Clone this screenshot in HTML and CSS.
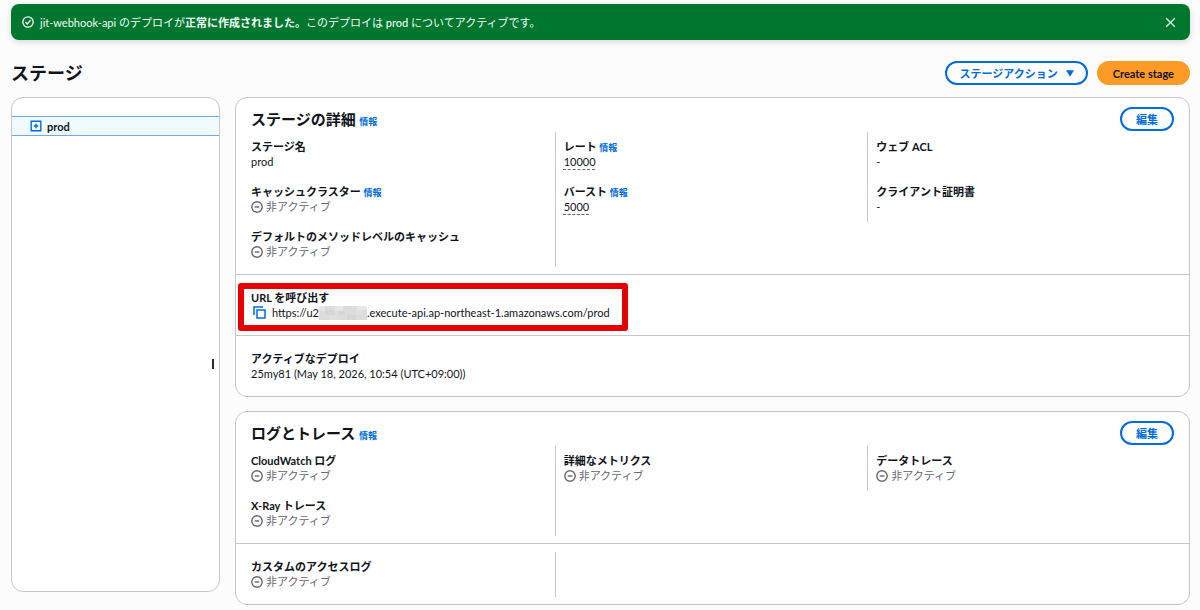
FILE: index.html
```html
<!DOCTYPE html>
<html lang="ja">
<head>
<meta charset="utf-8">
<meta name="viewport" content="width=device-width, initial-scale=1">
<title>ステージ</title>
<link rel="stylesheet" href="styles.css">
</head>
<body>
<svg class="defs" aria-hidden="true">
  <symbol id="minus-circle" viewBox="0 0 12 12"><circle cx="6" cy="6" r="5.2" fill="none" stroke="currentColor" stroke-width="1.4"/><path d="M3.7 6h4.6" stroke="currentColor" stroke-width="1.4"/></symbol>
</svg>
<div class="page">
  <div class="flash" role="status">
    <svg class="icon" viewBox="0 0 12 12" aria-hidden="true"><circle cx="6" cy="6" r="5.2" fill="none" stroke="currentColor" stroke-width="1.3"/><path d="M3.4 6.1l1.8 1.8 3.4-3.6" fill="none" stroke="currentColor" stroke-width="1.4"/></svg>
    <p class="flash-text">jit-webhook-api のデプロイが<strong>正常に作成されました。</strong>このデプロイは <span class="medium">prod</span> についてアクティブです。</p>
    <button class="flash-close" type="button" aria-label="閉じる"><svg viewBox="0 0 12 12" aria-hidden="true"><path d="M1.3 1.3l9.4 9.4M10.7 1.3l-9.4 9.4" stroke="currentColor" stroke-width="1.5"/></svg></button>
  </div>

  <header class="page-header">
    <h1>ステージ</h1>
    <div class="actions">
      <button class="btn btn-menu" type="button">ステージアクション<svg viewBox="0 0 8 7" aria-hidden="true"><path d="M0 .3h8L4 6.7z" fill="currentColor"/></svg></button>
      <button class="btn btn-primary" type="button">Create stage</button>
    </div>
  </header>

  <div class="layout">
    <nav class="card tree" aria-label="ステージ">
      <div class="tree-item">
        <button class="tree-toggle" type="button" aria-label="展開"><svg viewBox="0 0 12 12" aria-hidden="true"><path d="M1.2 1.2h9.6v9.6H1.2zM6 3.7v4.6M3.7 6h4.6" fill="none" stroke="currentColor" stroke-width="1.4"/></svg></button>
        <a href="#prod">prod</a>
      </div>
      <button class="tree-resize" type="button" aria-label="サイズ変更"></button>
    </nav>

    <main class="content">
      <section class="card">
        <div class="card-header">
          <h2>ステージの詳細 <a class="info" href="#info">情報</a></h2>
          <button class="btn" type="button">編集</button>
        </div>
        <div class="block block-first columns">
          <dl class="column">
            <div class="item"><dt>ステージ名</dt><dd>prod</dd></div>
            <div class="item"><dt>キャッシュクラスター <a class="info" href="#info">情報</a></dt><dd class="status"><svg class="icon" aria-hidden="true"><use href="#minus-circle"/></svg>非アクティブ</dd></div>
            <div class="item"><dt>デフォルトのメソッドレベルのキャッシュ</dt><dd class="status"><svg class="icon" aria-hidden="true"><use href="#minus-circle"/></svg>非アクティブ</dd></div>
          </dl>
          <dl class="column">
            <div class="item"><dt>レート <a class="info" href="#info">情報</a></dt><dd><span class="hint">10000</span></dd></div>
            <div class="item"><dt>バースト <a class="info" href="#info">情報</a></dt><dd><span class="hint">5000</span></dd></div>
          </dl>
          <dl class="column">
            <div class="item"><dt>ウェブ ACL</dt><dd>-</dd></div>
            <div class="item"><dt>クライアント証明書</dt><dd>-</dd></div>
          </dl>
        </div>
        <div class="block">
          <dl class="item marked">
            <dt>URL を呼び出す</dt>
            <dd class="url">
              <button class="copy" type="button" aria-label="コピー"><svg viewBox="0 0 13 13" aria-hidden="true"><path d="M1 9V1h9M4 4h8v8H4z" fill="none" stroke="currentColor" stroke-width="1.5"/></svg></button>
              <span>https://u2</span><svg class="redacted" viewBox="0 0 48 14" preserveAspectRatio="none" aria-hidden="true"><path d="M0 0h48v14H0z" fill="#dcdcdc"/><path d="M0 0h6v5H0zM16 0h8v5h-8zM38 0h10v4H38z" fill="#e6e6e6"/><path d="M6 4h9v5H6zM28 9h9v5h-9zM20 5h6v4h-6z" fill="#d6d6d6"/><path d="M37 4h6v5h-6zM11 9h6v5h-6z" fill="#e0e0e0"/></svg><span>.execute-api.ap-northeast-1.amazonaws.com/prod</span>
            </dd>
          </dl>
        </div>
        <div class="block">
          <dl class="item"><dt>アクティブなデプロイ</dt><dd>25my81 (May 18, 2026, 10:54 (UTC+09:00))</dd></dl>
        </div>
      </section>

      <section class="card">
        <div class="card-header">
          <h2>ログとトレース <a class="info" href="#info">情報</a></h2>
          <button class="btn" type="button">編集</button>
        </div>
        <div class="block block-first columns">
          <dl class="column">
            <div class="item"><dt>CloudWatch ログ</dt><dd class="status"><svg class="icon" aria-hidden="true"><use href="#minus-circle"/></svg>非アクティブ</dd></div>
            <div class="item"><dt>X-Ray トレース</dt><dd class="status"><svg class="icon" aria-hidden="true"><use href="#minus-circle"/></svg>非アクティブ</dd></div>
          </dl>
          <dl class="column">
            <div class="item"><dt>詳細なメトリクス</dt><dd class="status"><svg class="icon" aria-hidden="true"><use href="#minus-circle"/></svg>非アクティブ</dd></div>
          </dl>
          <dl class="column">
            <div class="item"><dt>データトレース</dt><dd class="status"><svg class="icon" aria-hidden="true"><use href="#minus-circle"/></svg>非アクティブ</dd></div>
          </dl>
        </div>
        <div class="block columns">
          <dl class="column">
            <div class="item"><dt>カスタムのアクセスログ</dt><dd class="status"><svg class="icon" aria-hidden="true"><use href="#minus-circle"/></svg>非アクティブ</dd></div>
          </dl>
        </div>
      </section>
    </main>
  </div>
</div>
</body>
</html>
```
FILE: styles.css
```css
* { box-sizing: border-box; }

body {
  margin: 0;
  background: #fcfcfd;
  color: #0f141a;
  font: 11px/15px Lato, "Noto Sans CJK JP", sans-serif;
}

h1, h2, p, dl, dd { margin: 0; }
a { color: inherit; text-decoration: none; }
button { font: inherit; cursor: pointer; }
svg { display: block; flex: none; }
.defs { position: absolute; width: 0; height: 0; }

.page { padding: 4px 10px 5px 11px; }
.icon { width: 12px; height: 12px; }

/* Success banner */
.flash {
  display: flex;
  align-items: center;
  gap: 6px;
  min-height: 36px;
  padding: 0 14px 0 11px;
  border-radius: 8px;
  background: #00772f;
  color: #f3fbf5;
  box-shadow: 0 2px 6px rgba(0, 7, 22, 0.15);
}
.flash-text { flex: 1; }
.medium { font-weight: 500; }
.flash-close { padding: 0; border: 0; background: none; color: #d9efe0; }
.flash-close svg { width: 11px; height: 11px; }

/* Page title and actions */
.page-header {
  display: flex;
  align-items: center;
  justify-content: space-between;
  padding: 21px 0 12px;
}
h1 { font-size: 18px; line-height: 24px; }
.actions { display: flex; gap: 9px; }

.btn {
  display: flex;
  align-items: center;
  gap: 8px;
  height: 24px;
  padding: 0 14px;
  border: 2px solid #006ce0;
  border-radius: 12px;
  background: #fff;
  color: #006ce0;
  font-weight: 700;
}
.btn-menu { padding: 0 12px; }
.btn-menu svg { width: 8px; height: 7px; }
.btn-primary { border-color: #ff9a26; background: #ff9a26; color: #0f141a; }

/* Two-pane layout */
.layout {
  display: grid;
  grid-template-columns: 209px minmax(0, 1fr);
  gap: 15px;
  align-items: start;
}
.content { display: grid; gap: 14px; }
.card { border: 1px solid #c6c6cd; border-radius: 12px; background: #fff; }

.tree {
  position: relative;
  height: calc(100vh - 115px);
  padding-top: 18px;
}
.tree-item {
  display: flex;
  align-items: center;
  gap: 5px;
  height: 20px;
  padding-left: 18px;
  border: solid #6fa8ee;
  border-width: 1px 0;
  background: #f0fbff;
  font-weight: 700;
}
.tree-toggle, .copy { padding: 0; border: 0; background: none; color: #006ce0; }
.tree-toggle svg { width: 12px; height: 12px; }
.tree-resize {
  position: absolute;
  top: 53%;
  right: 5px;
  width: 2px;
  height: 10px;
  padding: 0;
  border: 0;
  background: #232b37;
}

/* Cards */
.card-header {
  display: flex;
  align-items: center;
  justify-content: space-between;
  padding: 9px 15px 1px;
}
h2 { font-size: 15px; line-height: 24px; }
.info { color: #006ce0; font-size: 9px; line-height: 9px; font-weight: 700; }

.block { padding: 8px 15px 7px; border-top: 1px solid #c6c6cd; }
.block-first { padding-top: 0; border-top: 0; }
.columns {
  display: grid;
  grid-template-columns: repeat(3, minmax(0, 1fr));
  gap: 15px;
  align-items: start;
}
.column { margin-right: -7px; border-right: 1px solid #c6c6cd; }
.column:nth-child(3) { margin-right: 0; border-right: 0; }

.item { padding: 7px 0 8px; }
dt { height: 15px; font-weight: 700; }
dd { height: 15px; }
.status { display: flex; align-items: center; gap: 3px; color: #656871; }
.hint {
  text-decoration: underline dashed #656871 1px;
  text-underline-offset: 3px;
}

.url { display: flex; align-items: center; padding-left: 2px; }
.copy { margin-right: 6px; }
.copy svg { width: 13px; height: 13px; }
.redacted { width: 48px; height: 14px; }

/* Red frame drawn over the invoke URL */
.marked { position: relative; width: fit-content; }
.marked::after {
  content: "";
  position: absolute;
  inset: 0 -18px -3px -13px;
  border: 6px solid #e60000;
  border-radius: 3px;
  pointer-events: none;
}
```
